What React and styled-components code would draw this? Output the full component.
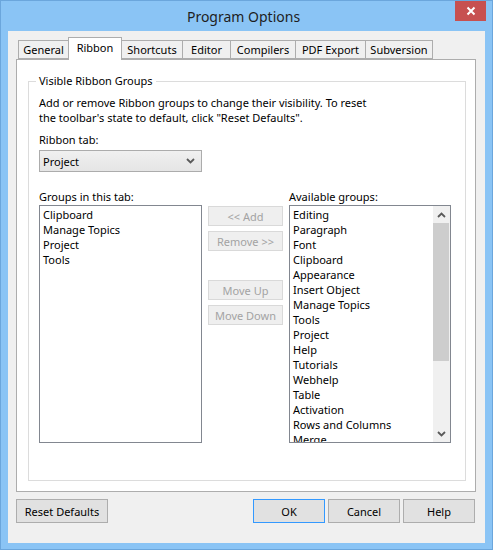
import React from 'react';
import styled, { createGlobalStyle } from 'styled-components';

const colors = {
  frame: '#8ac4f5',
  frameEdge: '#6ba6dc',
  client: '#f0f0f0',
  close: '#c75050',
  border: '#adadad',
  groupLine: '#dcdcdc',
  listBorder: '#828790',
  text: '#000000',
  disabled: '#a3a3a3',
  focus: '#3399ff',
};

const GlobalStyle = createGlobalStyle`
  html, body {
    margin: 0;
    padding: 0;
  }
  body {
    font-family: "Noto Sans", "Open Sans", sans-serif;
    font-size: 11px;
    color: ${colors.text};
  }
`;

const Window = styled.div`
  box-sizing: border-box;
  width: 493px;
  height: 550px;
  background: ${colors.frame};
  border: 1px solid ${colors.frameEdge};
  display: flex;
  flex-direction: column;
`;

const TitleBar = styled.div`
  height: 30px;
  display: grid;
  grid-template-columns: 1fr auto 1fr;
  align-items: start;
  padding-right: 6px;
`;

const Title = styled.div`
  grid-column: 2;
  font-size: 14px;
  line-height: 31px;
  color: #1e1e1e;
`;

const CloseButton = styled.button`
  grid-column: 3;
  justify-self: end;
  width: 31px;
  height: 20px;
  border: none;
  padding: 0;
  background: ${colors.close};
  display: flex;
  align-items: center;
  justify-content: center;
`;

const Client = styled.div`
  flex: 1;
  margin: 0 7px 7px 7px;
  background: ${colors.client};
  padding: 6px 9px 20px 8px;
  display: flex;
  flex-direction: column;
`;

const TabStrip = styled.div`
  display: flex;
  align-items: flex-end;
  height: 22px;
  padding-left: 2px;
  position: relative;
  z-index: 1;
`;

const Tab = styled.div`
  box-sizing: border-box;
  width: ${(p) => p.w}px;
  height: ${(p) => (p.active ? 23 : 19)}px;
  margin-left: -1px;
  margin-bottom: ${(p) => (p.active ? -1 : 0)}px;
  border: 1px solid ${colors.border};
  border-bottom: ${(p) => (p.active ? 'none' : `1px solid ${colors.border}`)};
  background: ${(p) => (p.active ? '#ffffff' : '#f0f0f0')};
  text-align: center;
  line-height: ${(p) => (p.active ? 19 : 18)}px;
  white-space: nowrap;
  &:first-child {
    margin-left: 0;
  }
`;

const Panel = styled.div`
  box-sizing: border-box;
  height: 433px;
  background: #ffffff;
  border: 1px solid ${colors.border};
  padding: 13px 9px 10px 11px;
  display: flex;
`;

const Group = styled.fieldset`
  flex: 1;
  margin: 0;
  border: 1px solid ${colors.groupLine};
  padding: 6px 10px 0 10px;
  min-width: 0;
`;

const Legend = styled.legend`
  padding: 0 3px;
  margin-left: -3px;
  line-height: 16px;
`;

const Description = styled.p`
  margin: 0;
  line-height: 15px;
  white-space: nowrap;
`;

const FieldLabel = styled.div`
  line-height: 15px;
  margin-top: ${(p) => p.top || 0}px;
  grid-column: ${(p) => p.col || 'auto'};
`;

const Select = styled.div`
  box-sizing: border-box;
  width: 163px;
  height: 22px;
  margin-top: 3px;
  border: 1px solid #acacac;
  background: linear-gradient(#f0f0f0, #e5e5e5);
  display: flex;
  align-items: center;
  justify-content: space-between;
  padding: 0 6px 0 3px;
`;

const Lists = styled.div`
  display: grid;
  grid-template-columns: 163px 75px 162px;
  grid-template-rows: 15px 238px;
  column-gap: 6px;
  row-gap: 1px;
  margin-top: 17px;
`;

const ListBox = styled.div`
  box-sizing: border-box;
  grid-row: 2;
  border: 1px solid ${colors.listBorder};
  background: #ffffff;
  display: flex;
  overflow: hidden;
`;

const Items = styled.ul`
  flex: 1;
  list-style: none;
  margin: 0;
  padding: 1px 3px;
  overflow: hidden;
`;

const Item = styled.li`
  line-height: 15px;
  white-space: nowrap;
`;

const ScrollBar = styled.div`
  width: 17px;
  background: #f0f0f0;
  display: flex;
  flex-direction: column;
`;

const ScrollArrow = styled.div`
  height: 17px;
  display: flex;
  align-items: center;
  justify-content: center;
`;

const Thumb = styled.div`
  height: 138px;
  margin: 0 1px 0 0;
  background: #cdcdcd;
`;

const ScrollSpace = styled.div`
  flex: 1;
`;

const MoveButtons = styled.div`
  grid-row: 2;
  grid-column: 2;
  display: flex;
  flex-direction: column;
  padding-top: 1px;
`;

const SmallButton = styled.button`
  box-sizing: border-box;
  height: 20px;
  margin-top: ${(p) => p.gap || 0}px;
  border: 1px solid #d9d9d9;
  background: #efefef;
  color: ${colors.disabled};
  font: inherit;
  padding: 0;
`;

const Footer = styled.div`
  display: flex;
  align-items: center;
  margin-top: 7px;
  gap: 3px;
`;

const Button = styled.button`
  box-sizing: border-box;
  width: ${(p) => p.w || 72}px;
  height: 24px;
  margin-right: ${(p) => p.push || 0}px;
  border: 1px solid ${(p) => (p.primary ? colors.focus : colors.border)};
  background: #e1e1e1;
  font: inherit;
  color: ${colors.text};
  padding: 0;
`;

const tabs = [
  { name: 'General', w: 51 },
  { name: 'Ribbon', w: 54, active: true },
  { name: 'Shortcuts', w: 62 },
  { name: 'Editor', w: 49 },
  { name: 'Compilers', w: 66 },
  { name: 'PDF Export', w: 71 },
  { name: 'Subversion', w: 68 },
];

const inTab = ['Clipboard', 'Manage Topics', 'Project', 'Tools'];

const available = [
  'Editing', 'Paragraph', 'Font', 'Clipboard', 'Appearance', 'Insert Object',
  'Manage Topics', 'Tools', 'Project', 'Help', 'Tutorials', 'Webhelp', 'Table',
  'Activation', 'Rows and Columns', 'Merge',
];

function Chevron({ up }) {
  return (
    <svg width="9" height="6" viewBox="0 0 9 6">
      <path
        d={up ? 'M1 5 L4.5 1.5 L8 5' : 'M1 1 L4.5 4.5 L8 1'}
        fill="none"
        stroke="#5a5a5a"
        strokeWidth="1.8"
      />
    </svg>
  );
}

function App() {
  return (
    <>
      <GlobalStyle />
      <Window>
        <TitleBar>
          <Title>Program Options</Title>
          <CloseButton aria-label="Close">
            <svg width="10" height="10" viewBox="0 0 10 10">
              <path d="M1.5 1.5 L8.5 8.5 M8.5 1.5 L1.5 8.5" stroke="#fff" strokeWidth="2" />
            </svg>
          </CloseButton>
        </TitleBar>
        <Client>
          <TabStrip>
            {tabs.map((t) => (
              <Tab key={t.name} w={t.w} active={t.active}>{t.name}</Tab>
            ))}
          </TabStrip>
          <Panel>
            <Group>
              <Legend>Visible Ribbon Groups</Legend>
              <Description>
                Add or remove Ribbon groups to change their visibility. To reset
                <br />
                the toolbar's state to default, click "Reset Defaults".
              </Description>
              <FieldLabel top={7}>Ribbon tab:</FieldLabel>
              <Select>
                <span>Project</span>
                <Chevron />
              </Select>
              <Lists>
                <FieldLabel>Groups in this tab:</FieldLabel>
                <FieldLabel col={3}>Available groups:</FieldLabel>
                <ListBox>
                  <Items>
                    {inTab.map((g) => <Item key={g}>{g}</Item>)}
                  </Items>
                </ListBox>
                <MoveButtons>
                  <SmallButton disabled>&lt;&lt; Add</SmallButton>
                  <SmallButton disabled gap={5}>Remove &gt;&gt;</SmallButton>
                  <SmallButton disabled gap={29}>Move Up</SmallButton>
                  <SmallButton disabled gap={5}>Move Down</SmallButton>
                </MoveButtons>
                <ListBox>
                  <Items>
                    {available.map((g) => <Item key={g}>{g}</Item>)}
                  </Items>
                  <ScrollBar>
                    <ScrollArrow><Chevron up /></ScrollArrow>
                    <Thumb />
                    <ScrollSpace />
                    <ScrollArrow><Chevron /></ScrollArrow>
                  </ScrollBar>
                </ListBox>
              </Lists>
            </Group>
          </Panel>
          <Footer>
            <Button w={92} push={142}>Reset Defaults</Button>
            <Button primary>OK</Button>
            <Button>Cancel</Button>
            <Button>Help</Button>
          </Footer>
        </Client>
      </Window>
    </>
  );
}

export default App;
